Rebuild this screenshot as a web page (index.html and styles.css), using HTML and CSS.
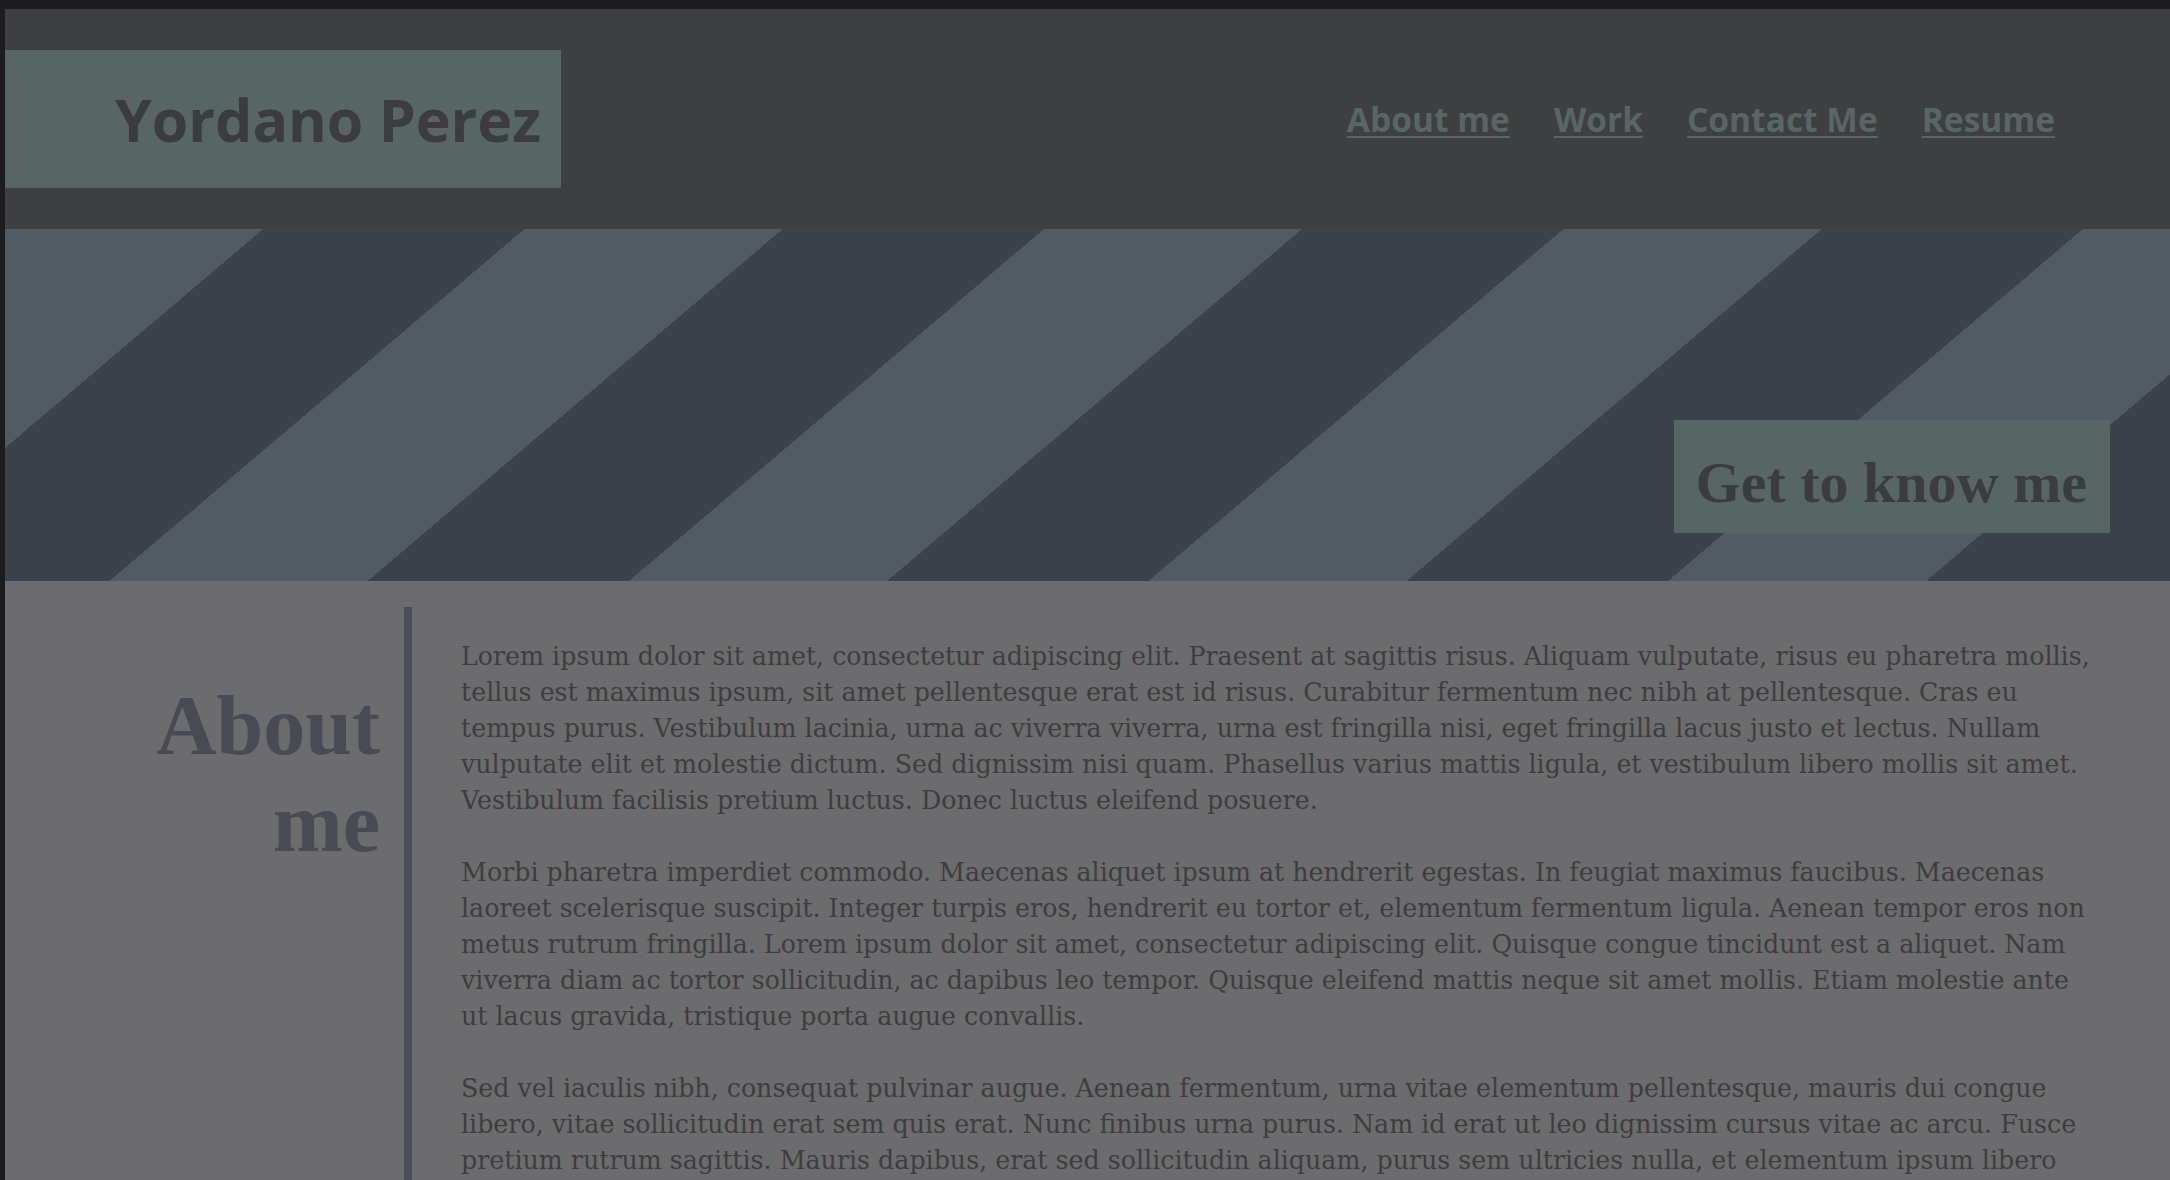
FILE: index.html
```html
<!DOCTYPE html>
<html lang="en">
<head>
<meta charset="utf-8">
<title>Yordano Perez</title>
<link rel="stylesheet" href="styles.css">
</head>
<body>
<div class="page">
  <header class="site-header">
    <div class="logo"><h1 class="logo-text">Yordano Perez</h1></div>
    <nav class="nav">
      <a href="#about">About me</a>
      <a href="#work">Work</a>
      <a href="#contact">Contact Me</a>
      <a href="#resume">Resume</a>
    </nav>
  </header>
  <section class="hero">
    <div class="hero-tag"><h2>Get to know me</h2></div>
  </section>
  <section class="about" id="about">
    <h2 class="about-title">About me</h2>
    <div class="about-text">
      <p>Lorem ipsum dolor sit amet, consectetur adipiscing elit. Praesent at sagittis risus. Aliquam vulputate, risus eu pharetra mollis, tellus est maximus ipsum, sit amet pellentesque erat est id risus. Curabitur fermentum nec nibh at pellentesque. Cras eu tempus purus. Vestibulum lacinia, urna ac viverra viverra, urna est fringilla nisi, eget fringilla lacus justo et lectus. Nullam vulputate elit et molestie dictum. Sed dignissim nisi quam. Phasellus varius mattis ligula, et vestibulum libero mollis sit amet. Vestibulum facilisis pretium luctus. Donec luctus eleifend posuere.</p>
      <p>Morbi pharetra imperdiet commodo. Maecenas aliquet ipsum at hendrerit egestas. In feugiat maximus faucibus. Maecenas laoreet scelerisque suscipit. Integer turpis eros, hendrerit eu tortor et, elementum fermentum ligula. Aenean tempor eros non metus rutrum fringilla. Lorem ipsum dolor sit amet, consectetur adipiscing elit. Quisque congue tincidunt est a aliquet. Nam viverra diam ac tortor sollicitudin, ac dapibus leo tempor. Quisque eleifend mattis neque sit amet mollis. Etiam molestie ante ut lacus gravida, tristique porta augue convallis.</p>
      <p>Sed vel iaculis nibh, consequat pulvinar augue. Aenean fermentum, urna vitae elementum pellentesque, mauris dui congue libero, vitae sollicitudin erat sem quis erat. Nunc finibus urna purus. Nam id erat ut leo dignissim cursus vitae ac arcu. Fusce pretium rutrum sagittis. Mauris dapibus, erat sed sollicitudin aliquam, purus sem ultricies nulla, et elementum ipsum libero non nisi. Donec vitae tortor sed lorem tincidunt feugiat.</p>
    </div>
  </section>
</div>
</body>
</html>
```
FILE: styles.css
```css
html, body {
  margin: 0;
  padding: 0;
}
body {
  background: #1c1c1f;
  padding: 9px 0 0 5px;
  overflow: hidden;
}
.page {
  background: #6c6c6e;
  min-height: 1171px;
}
.site-header {
  height: 220px;
  background: #3e3f41;
  display: flex;
  align-items: center;
  justify-content: space-between;
}
.logo {
  background: #576565;
  width: 556px;
  height: 138px;
  box-sizing: border-box;
  padding-right: 20px;
  display: flex;
  align-items: center;
  justify-content: flex-end;
}
.logo-text {
  margin: 0;
  font-family: "Open Sans", "Liberation Sans", sans-serif;
  font-weight: 700;
  font-size: 59px;
  color: #3c3c3e;
  line-height: 1;
}
.nav {
  display: flex;
  gap: 44px;
  padding-right: 115px;
}
.nav a {
  font-family: "Open Sans", "Liberation Sans", sans-serif;
  font-weight: 700;
  font-size: 33.5px;
  color: #586665;
  text-decoration: underline;
  text-underline-offset: 4px;
  text-decoration-thickness: 2px;
}
.hero {
  height: 352px;
  background: repeating-linear-gradient(139.7deg, #525a62 0px, #525a62 167px, #3b424c 167px, #3b424c 336px);
  display: flex;
  justify-content: flex-end;
  align-items: flex-end;
  padding: 0 60px 48px 0;
  box-sizing: border-box;
}
.hero-tag {
  background: #576565;
  padding: 29px 23px 17px 22px;
}
.hero-tag h2 {
  margin: 0;
  font-family: "Liberation Serif", "Times New Roman", serif;
  font-weight: 700;
  font-size: 58px;
  line-height: normal;
  color: #3c3c3e;
}
.about {
  display: grid;
  grid-template-columns: 375px 1fr;
  column-gap: 24px;
  padding-top: 26px;
}
.about-title {
  margin: 70px 0 0;
  padding-left: 110px;
  text-align: right;
  font-family: "Liberation Serif", "Times New Roman", serif;
  font-weight: 700;
  font-size: 84px;
  line-height: 97px;
  color: #484b53;
}
.about-text {
  border-left: 8px solid #4a4d55;
  padding: 32px 75px 0 49px;
  min-height: 700px;
}
.about-text p {
  margin: 0 0 36px;
  font-family: "DejaVu Serif", "Liberation Serif", serif;
  font-size: 25.3px;
  line-height: 36px;
  color: #3e3c3e;
}
```
